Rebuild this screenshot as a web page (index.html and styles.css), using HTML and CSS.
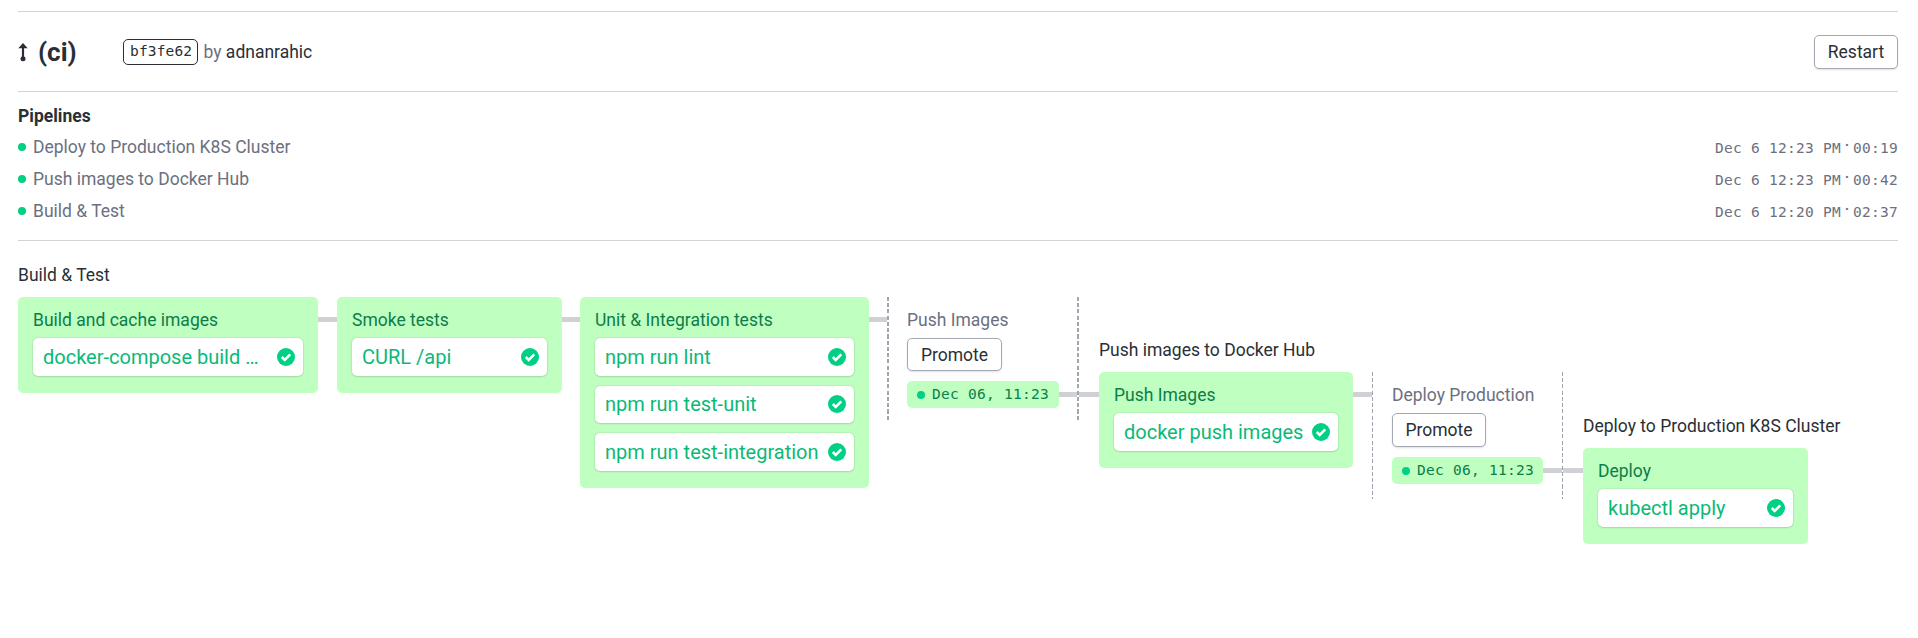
FILE: index.html
```html
<!DOCTYPE html>
<html lang="en">
<head>
<meta charset="utf-8">
<title>Workflow</title>
<link rel="stylesheet" href="styles.css">
</head>
<body>
<svg width="0" height="0" class="defs"><symbol id="check" viewBox="0 0 18 18"><circle cx="9" cy="9" r="9" fill="#00d084"/><path d="M4.800 9l2.900 2.900 5.600-5.600" fill="none" stroke="#fff" stroke-width="2.500"/></symbol></svg>
<main class="page">
  <header class="header">
    <svg class="arrow" viewBox="0 0 10 20"><path d="M5 1L0.300 6.300h9.400z" fill="#2a2f36"/><path d="M5 4v13" stroke="#2a2f36" stroke-width="2.200"/><circle cx="5" cy="16.700" r="2.500" fill="#2a2f36"/></svg>
    <h1 class="title">(ci)</h1>
    <span class="hash">bf3fe62</span>
    <span class="by">by <span class="author">adnanrahic</span></span>
    <button class="btn restart">Restart</button>
  </header>
  <section class="pipelines">
    <h2 class="heading">Pipelines</h2>
    <div class="row"><i class="dot"></i><span class="pname">Deploy to Production K8S Cluster</span><span class="time">Dec 6 12:23 PM<i class="sep">·</i>00:19</span></div>
    <div class="row"><i class="dot"></i><span class="pname">Push images to Docker Hub</span><span class="time">Dec 6 12:23 PM<i class="sep">·</i>00:42</span></div>
    <div class="row"><i class="dot"></i><span class="pname">Build &amp; Test</span><span class="time">Dec 6 12:20 PM<i class="sep">·</i>02:37</span></div>
  </section>
  <section class="flow">
    <div class="pipe">
      <h3 class="name">Build &amp; Test</h3>
      <div class="blocks">
        <div class="card w300"><div class="label">Build and cache images</div>
          <div class="job"><span class="cmd">docker-compose build …</span><svg class="check"><use href="#check"/></svg></div>
        </div>
        <div class="link"></div>
        <div class="card w225"><div class="label">Smoke tests</div>
          <div class="job"><span class="cmd">CURL /api</span><svg class="check"><use href="#check"/></svg></div>
        </div>
        <div class="link short"></div>
        <div class="card w289"><div class="label">Unit &amp; Integration tests</div>
          <div class="job"><span class="cmd">npm run lint</span><svg class="check"><use href="#check"/></svg></div>
          <div class="job"><span class="cmd">npm run test-unit</span><svg class="check"><use href="#check"/></svg></div>
          <div class="job"><span class="cmd">npm run test-integration</span><svg class="check"><use href="#check"/></svg></div>
        </div>
        <div class="link short"></div>
      </div>
    </div>
    <div class="promo">
      <div class="label">Push Images</div>
      <button class="btn promote">Promote</button>
      <div class="event"><span class="pill"><i class="dot"></i>Dec 06, 11:23</span><span class="wire"></span></div>
    </div>
    <div class="wire-out first"></div>
    <div class="pipe second">
      <h3 class="name">Push images to Docker Hub</h3>
      <div class="blocks">
        <div class="card w254"><div class="label">Push Images</div>
          <div class="job"><span class="cmd">docker push images</span><svg class="check"><use href="#check"/></svg></div>
        </div>
        <div class="link"></div>
      </div>
    </div>
    <div class="promo thin">
      <div class="label">Deploy Production</div>
      <button class="btn promote">Promote</button>
      <div class="event"><span class="pill"><i class="dot"></i>Dec 06, 11:23</span><span class="wire"></span></div>
    </div>
    <div class="wire-out last"></div>
    <div class="pipe third">
      <h3 class="name">Deploy to Production K8S Cluster</h3>
      <div class="blocks">
        <div class="card w225"><div class="label">Deploy</div>
          <div class="job"><span class="cmd">kubectl apply</span><svg class="check"><use href="#check"/></svg></div>
        </div>
      </div>
    </div>
  </section>
</main>
</body>
</html>
```
FILE: styles.css
```css
* { box-sizing: border-box; }
body { margin: 0; background: #fff; color: #2a2f36; font: 17.5px/25px Roboto, "Noto Sans", sans-serif; }
h1, h2, h3 { margin: 0; }
i { font-style: normal; }
.defs { display: block; }
.page { padding: 11px 20px 0 18px; }
.header { display: flex; align-items: center; height: 81px; border: solid #d1d3d8; border-width: 1px 0; }
.arrow { width: 10px; height: 20px; }
.title { width: 85px; margin-left: 10px; font-size: 26px; line-height: 32px; font-weight: 700; }
.hash { width: 75px; height: 26px; padding-left: 6px; border: 1px solid #2a2f36; border-radius: 5px; font: 14.5px/23px "DejaVu Sans Mono", monospace; letter-spacing: .15px; }
.by { margin-left: 5.5px; padding-top: 1px; color: #6b7080; }
.author { color: #2a2f36; }
.btn { display: block; padding: 1px 0 0; background: #fff; border: 1px solid #a3a8b3; border-radius: 5px; box-shadow: 0 1px 2px rgba(0, 0, 0, .12); color: #2a2f36; font: inherit; }
.restart { width: 84px; height: 34px; margin-left: auto; }
.pipelines { height: 149px; padding-top: 11px; border-bottom: 1px solid #d1d3d8; color: #6b7080; }
.heading { margin-bottom: 2px; font-size: 17.5px; line-height: 26px; font-weight: 700; color: #2a2f36; }
.row { display: flex; align-items: center; height: 32px; }
.dot { flex: none; width: 8px; height: 8px; margin-right: 7px; border-radius: 50%; background: #00d084; }
.time { display: flex; margin-left: auto; padding-top: 1px; font: 14.5px/20px "DejaVu Sans Mono", monospace; letter-spacing: .27px; }
.sep { width: 12px; margin-top: -2px; text-align: center; font-family: Roboto, sans-serif; font-weight: 700; }
.flow { display: flex; align-items: flex-start; padding-top: 20px; }
.name { height: 36px; padding-top: 1px; font-size: 17.5px; line-height: 26px; font-weight: 400; white-space: nowrap; }
.second { width: 273px; margin-top: 75px; }
.third { margin-top: 151px; }
.blocks { display: flex; align-items: flex-start; }
.card { flex: none; padding: 11px 15px 7.5px; border-radius: 5px; background: #bfffbf; }
.w300 { width: 300px; }
.w289 { width: 289px; }
.w254 { width: 254px; }
.w225 { width: 225px; }
.label { height: 30px; white-space: nowrap; line-height: 25px; }
.card .label { color: #0b7d4b; }
.job { display: flex; align-items: center; gap: 4px; height: 37.5px; margin-bottom: 10px; padding: 0 8px 0 10px; border-radius: 5px; background: #fff; box-shadow: 0 0 2px rgba(0, 0, 0, .18), 0 1px 2px rgba(0, 0, 0, .1); color: #0bb977; font-size: 20px; }
.cmd { flex: 1; padding-top: 1px; white-space: nowrap; }
.check { flex: none; width: 18px; height: 18px; }
.link { flex: none; width: 19px; height: 5px; margin-top: 20px; background: #d0d1d6; }
.link.short { width: 18px; }
.promo { --dash: repeating-linear-gradient(#a0a5b0 0 4px, transparent 4px 6.25px); width: 192px; height: 125px; margin-top: 36px; padding: 11px 2px 0 20px; background: var(--dash) left / 2px 100% no-repeat, var(--dash) right / 2px 100% no-repeat; color: #6b7080; }
.promo.thin { width: 191px; height: 127px; margin-top: 111px; padding-right: 1px; background-size: 1px 100%; }
.promote { width: 95px; height: 33px; }
.thin .promote { width: 94px; height: 34px; }
.event { display: flex; align-items: center; margin-top: 10px; }
.pill { flex: none; display: flex; align-items: center; width: 152px; height: 27px; padding-left: 10px; border-radius: 5px; background: #bfffbf; color: #0b7d4b; font: 14.5px/27px "DejaVu Sans Mono", monospace; letter-spacing: .27px; }
.thin .pill { width: 151px; }
.wire { flex: 1; height: 5px; background: #d0d1d6; }
.wire-out { flex: none; height: 5px; background: #d0d1d6; }
.wire-out.first { width: 20px; margin-top: 131px; }
.wire-out.last { width: 20px; margin-top: 207px; }
```
